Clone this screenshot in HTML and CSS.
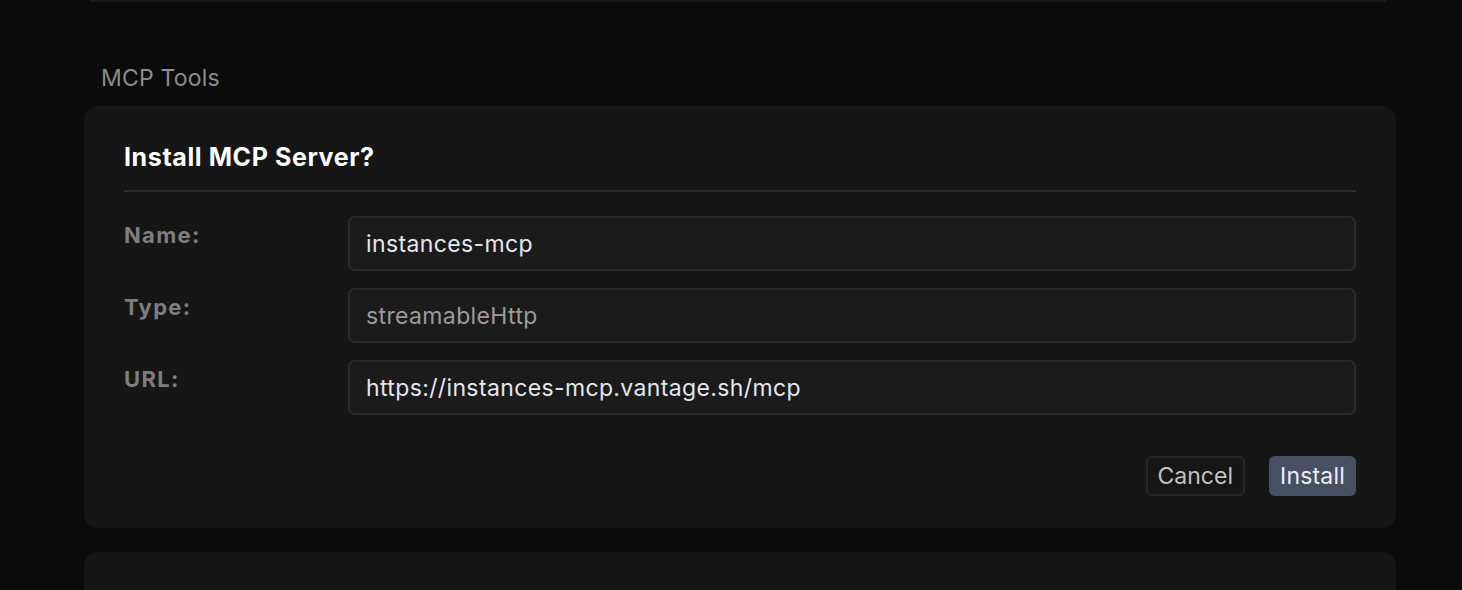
FILE: index.html
```html
<!DOCTYPE html>
<html lang="en">
<head>
  <meta charset="UTF-8">
  <meta name="viewport" content="width=device-width, initial-scale=1.0">
  <title>MCP Tools</title>
  <link rel="stylesheet" href="styles.css">
</head>
<body>
  <main class="column">
    <div class="prev-card"></div>

    <h2 class="section-title">MCP Tools</h2>

    <section class="card">
      <h1 class="card-title">Install MCP Server?</h1>
      <div class="fields">
        <label class="field-label" for="name">Name:</label>
        <div class="field-value" id="name">instances-mcp</div>

        <label class="field-label" for="type">Type:</label>
        <div class="field-value muted" id="type">streamableHttp</div>

        <label class="field-label" for="url">URL:</label>
        <div class="field-value" id="url">https://instances-mcp.vantage.sh/mcp</div>
      </div>
      <div class="actions">
        <button class="btn btn-cancel">Cancel</button>
        <button class="btn btn-install">Install</button>
      </div>
    </section>

    <section class="card next-card"></section>
  </main>
</body>
</html>
```

FILE: styles.css
```css
html, body {
  margin: 0;
  height: 100%;
  overflow: hidden;
}
body {
  background-color: #0b0b0b;
  font-family: Inter, "Noto Sans", sans-serif;
  color: #e6e7ee;
}
.column {
  width: 1312px;
  margin-left: 84px;
}
.prev-card {
  height: 2px;
  margin: 0 9px 0 6px;
  background: #1b1b1b;
  border-radius: 0 0 10px 10px;
}
.section-title {
  margin: 0;
  padding: 60px 0 0 17px;
  height: 44px;
  font-size: 23px;
  font-weight: 400;
  line-height: 32px;
  letter-spacing: 0.2px;
  color: #8b8b8b;
  box-sizing: content-box;
}
.card {
  background: #161616;
  border-radius: 14px;
  padding: 36px 40px 32px;
}
.card-title {
  margin: 0;
  font-size: 25px;
  font-weight: 700;
  line-height: 30px;
  letter-spacing: 0.6px;
  color: #ffffff;
  padding-bottom: 18px;
  border-bottom: 2px solid #2c2c2c;
}
.fields {
  display: grid;
  grid-template-columns: 224px 1fr;
  row-gap: 17px;
  margin-top: 24px;
}
.field-label {
  font-size: 22px;
  font-weight: 700;
  line-height: 26px;
  letter-spacing: 1.3px;
  color: #7e7e7e;
  padding-top: 6px;
}
.field-value {
  height: 51px;
  border: 2px solid #2a2a2a;
  border-radius: 7px;
  background: #1b1b1b;
  padding: 0 16px;
  display: flex;
  align-items: center;
  font-size: 23px;
  letter-spacing: 0.37px;
  color: #e4e6ee;
}
.field-value.muted {
  color: #9b9b9b;
}
.actions {
  display: flex;
  justify-content: flex-end;
  gap: 24px;
  margin-top: 41px;
}
.btn {
  height: 40px;
  padding: 0 10px;
  border-radius: 6px;
  font-family: inherit;
  font-size: 23px;
  cursor: pointer;
}
.btn-cancel {
  background: #161616;
  border: 2px solid #262626;
  color: #c2c2c2;
}
.btn-install {
  background: #4a5063;
  border: none;
  color: #eceef4;
  padding: 0 11px;
  letter-spacing: 0.2px;
}
.next-card {
  margin-top: 24px;
  height: 80px;
  padding: 0;
}
```
